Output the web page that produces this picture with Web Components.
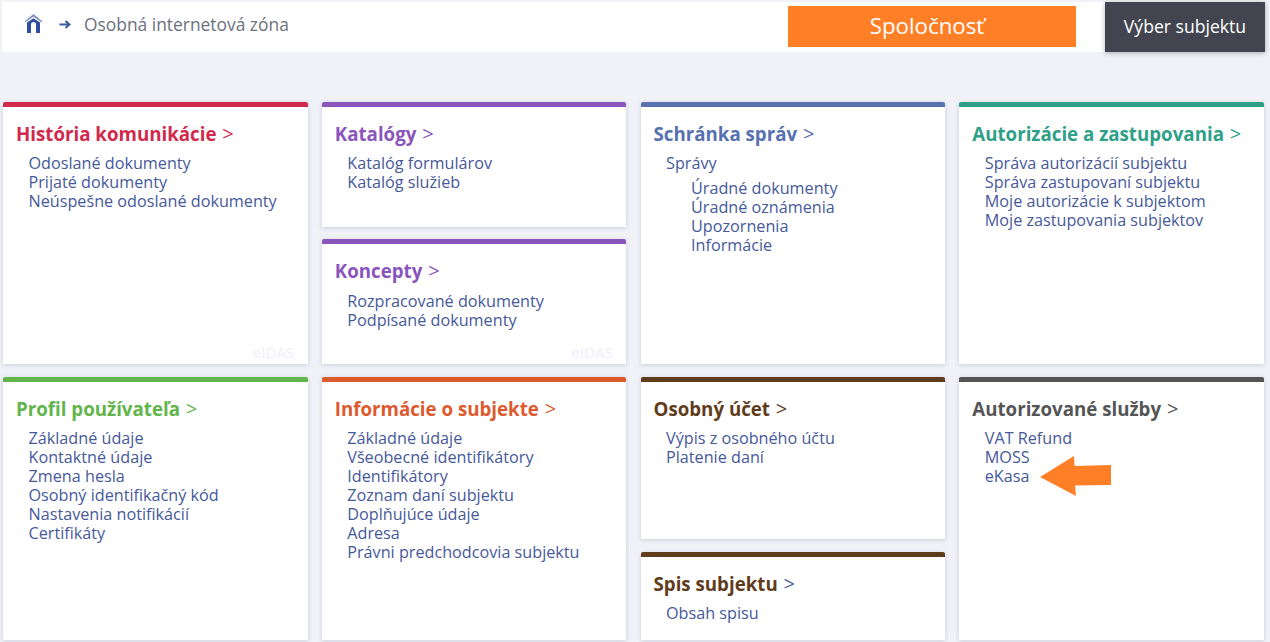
<!DOCTYPE html>
<html lang="sk"><head><meta charset="utf-8"><title>Osobná internetová zóna</title>
<style>
html,body{margin:0;height:100%;overflow:hidden}
body{background:#f1f2f7;font-family:"Open Sans",sans-serif;color:#444}
</style></head><body>
<app-page>
<top-bar slot="head"></top-bar>
<portal-card slot="c1" title-text="História komunikácie" color="#d2284c" eidas>
<a-link>Odoslané dokumenty</a-link><a-link>Prijaté dokumenty</a-link><a-link>Neúspešne odoslané dokumenty</a-link>
</portal-card>
<portal-card slot="c2a" title-text="Katalógy" color="#8a55bb">
<a-link>Katalóg formulárov</a-link><a-link>Katalóg služieb</a-link>
</portal-card>
<portal-card slot="c2b" title-text="Koncepty" color="#8a55bb" eidas style="--gap:8px">
<a-link>Rozpracované dokumenty</a-link><a-link>Podpísané dokumenty</a-link>
</portal-card>
<portal-card slot="c3" title-text="Schránka správ" color="#5670b0">
<a-link>Správy</a-link>
<link-group><a-link>Úradné dokumenty</a-link><a-link>Úradné oznámenia</a-link><a-link>Upozornenia</a-link><a-link>Informácie</a-link></link-group>
</portal-card>
<portal-card slot="c4" title-text="Autorizácie a zastupovania" color="#2fa088">
<a-link>Správa autorizácií subjektu</a-link><a-link>Správa zastupovaní subjektu</a-link><a-link>Moje autorizácie k subjektom</a-link><a-link>Moje zastupovania subjektov</a-link>
</portal-card>
<portal-card slot="c5" title-text="Profil používateľa" color="#62b54a">
<a-link>Základné údaje</a-link><a-link>Kontaktné údaje</a-link><a-link>Zmena hesla</a-link><a-link>Osobný identifikačný kód</a-link><a-link>Nastavenia notifikácií</a-link><a-link>Certifikáty</a-link>
</portal-card>
<portal-card slot="c6" title-text="Informácie o subjekte" color="#dc5a2e">
<a-link>Základné údaje</a-link><a-link>Všeobecné identifikátory</a-link><a-link>Identifikátory</a-link><a-link>Zoznam daní subjektu</a-link><a-link>Doplňujúce údaje</a-link><a-link>Adresa</a-link><a-link>Právni predchodcovia subjektu</a-link>
</portal-card>
<portal-card slot="c7a" title-text="Osobný účet" color="#5f3c1c">
<a-link>Výpis z osobného účtu</a-link><a-link>Platenie daní</a-link>
</portal-card>
<portal-card slot="c7b" title-text="Spis subjektu" color="#5f3c1c" style="--gt:#4a5fa5">
<a-link>Obsah spisu</a-link>
</portal-card>
<portal-card slot="c8" title-text="Autorizované služby" color="#555555">
<a-link>VAT Refund</a-link><a-link>MOSS</a-link><a-link>eKasa</a-link>
<svg slot="over" width="72" height="41" viewBox="0 0 72 41" style="position:absolute;left:81px;top:74px"><polygon points="0,21 34,0 34.5,10 71,9 71,29 35,29.5 36,40" fill="#ff7f27"/></svg>
</portal-card>
</app-page>
<script>
const def=(n,html,extra={})=>{customElements.define(n,class extends HTMLElement{
 constructor(){super();this.attachShadow({mode:'open'}).innerHTML=html;}
 connectedCallback(){extra.init&&extra.init(this);}
});};
def('app-page',`<style>
:host{display:block;box-sizing:border-box;padding:2px 2px 0 2px;height:642px}
.grid{display:grid;grid-template-columns:repeat(4,304.5px);column-gap:14.25px;grid-template-rows:262px 263px;row-gap:13px;margin:50px 0 0 1px}
.stack{display:grid;min-height:0}
.s2{grid-template-rows:125px 125px;row-gap:12px}
.s3{grid-template-rows:162px 88px;row-gap:13px}
</style>
<slot name="head"></slot>
<div class="grid">
<slot name="c1"></slot>
<div class="stack s2"><slot name="c2a"></slot><slot name="c2b"></slot></div>
<slot name="c3"></slot><slot name="c4"></slot><slot name="c5"></slot><slot name="c6"></slot>
<div class="stack s3"><slot name="c7a"></slot><slot name="c7b"></slot></div>
<slot name="c8"></slot>
</div>`);
def('top-bar',`<style>
:host{display:flex;align-items:stretch;height:50px;background:#fff;margin-right:3px}
.home{margin:12px 0 0 23px;width:17px;height:19px}
.arrow{margin:17px 0 0 17px;width:12px;height:11px}
.crumb{margin:9px 0 0 13px;font-size:17.4px;line-height:26px;color:#6d717c;flex:1}
.org{box-sizing:border-box;width:288px;height:41px;margin-top:4px;padding-right:10px;background:#ff7f27;color:#fff;font-size:22.3px;line-height:39px;text-align:center}
.btn{box-sizing:border-box;width:160px;margin-left:29px;background:#42454f;color:#fff;font-size:17.6px;line-height:48px;text-align:center;box-shadow:0 1px 5px rgba(0,0,0,.3)}
</style>
<svg class="home" viewBox="0 0 17 19"><path d="M8.5 0 L17 7 V8.6 L8.5 2.8 L0 8.6 V7 Z" fill="#7f92c0"/><path d="M8.5 4.2 L15 8.6 V19 H11 V10 Q11 8 8.5 8 Q6 8 6 10 V19 H2 V8.6 Z" fill="#2f4f9e"/></svg>
<svg class="arrow" viewBox="0 0 12 11"><path d="M0.5 5.5 H10 M6.5 2 L10.5 5.5 L6.5 9" fill="none" stroke="#3d5aa0" stroke-width="2"/></svg>
<div class="crumb">Osobná internetová zóna</div>
<div class="org">Spoločnosť</div>
<div class="btn">Výber subjektu</div>`);
def('portal-card',`<style>
:host{display:block;position:relative;box-sizing:border-box;background:#fff;border-top:5px solid var(--c);border-radius:2px 2px 0 0;padding:14px 13px 0 13px;box-shadow:0 1px 4px rgba(150,155,190,.45);min-height:0;overflow:hidden}
h2{margin:0 0 var(--gap,7px);font-size:18.72px;line-height:26px;font-weight:700;color:var(--c)}
.t{font-weight:700}
.g{font-weight:400;font-size:20px;line-height:20px;color:var(--gt,var(--c));margin-left:1px}
.links{padding-left:12.5px;display:block}
.eidas{position:absolute;right:13.5px;bottom:2px;font-size:15px;line-height:19px;color:#eeeefc}
</style><h2><span class="t"></span> <span class="g">&gt;</span></h2><div class="links"><slot></slot></div><slot name="over"></slot><div class="eidas" hidden>eIDAS</div>`,
{init(el){const s=el.shadowRoot;s.querySelector('.t').textContent=el.getAttribute('title-text');el.style.setProperty('--c',el.getAttribute('color'));if(el.hasAttribute('eidas'))s.querySelector('.eidas').hidden=false;}});
def('a-link',`<style>:host{display:block;font-size:16.2px;line-height:19px;color:#46599a}</style><slot></slot>`);
def('link-group',`<style>:host{display:block;padding:6px 0 0 25px}</style><slot></slot>`);
</script>
</body></html>
